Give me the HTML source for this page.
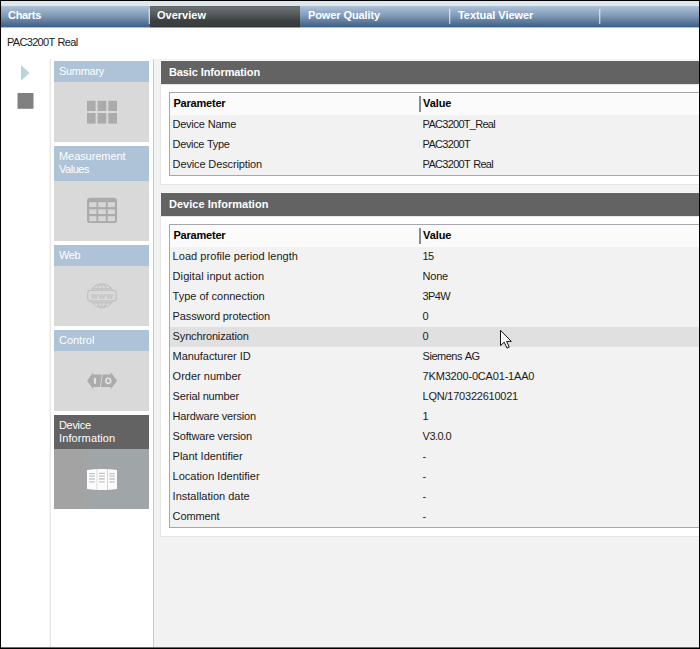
<!DOCTYPE html>
<html><head><meta charset="utf-8"><title>Device Information</title>
<style>
html,body{margin:0;padding:0;background:#fff;}
#app{position:relative;width:700px;height:649px;overflow:hidden;background:#fff;font-family:"Liberation Sans",sans-serif;}
#app div,#app span.t,#app svg{position:absolute;}
.t{white-space:nowrap;line-height:20px;height:20px;}
#frame{left:0;top:0;width:700px;height:649px;box-sizing:border-box;border:1px solid #000;z-index:50;box-shadow:inset 0 -1px 0 #6a6a6a;}
#strip{left:1px;top:1px;width:698px;height:5px;background:#dce7ee;}
#tabbar{left:1px;top:6px;width:698px;height:21px;background:linear-gradient(#b0c0d0 0,#b0c0d0 1px,#a9bdd5 1px,#7f99b6 10px,#446389 20px,#39628f 20px);}
#tabsel{left:150px;top:6px;width:150px;height:21px;background:linear-gradient(#626666 0,#626666 1px,#6b7071 1px,#565b5b 8px,#3b3f3f 15px,#393d3d 20px,#303434 20px);}
.sep{top:9px;width:1px;height:15px;background:rgba(255,255,255,.62);}
.sep2{top:9px;width:1px;height:15px;background:rgba(255,255,255,.22);}
.vline{width:1px;background:#d0d0d0;}
#main{left:154px;top:59px;width:545px;height:589px;background:#f2f2f2;}
.phead{left:161px;width:538px;height:23px;background:#636363;}
.pbody{left:160px;width:540px;background:#fff;border:1px solid #e6e6e6;box-sizing:border-box;}
.tbl{left:169px;width:540px;background:#f2f2f2;border:1px solid #a6a6ac;box-sizing:border-box;}
.thead{left:170px;width:530px;height:22px;background:#fbfbfb;}
.csep{left:419px;width:2px;height:16px;background:#8c8c8c;}
.chead{left:54px;width:95px;background:#aec3d8;}
.cbody{left:54px;width:95px;background:#d9d9d9;}

</style></head>
<body>
<div id="app">
<div id="strip"></div>
<div id="tabbar"></div>
<div id="tabsel"></div>
<div style="left:1px;top:27px;width:698px;height:1px;background:#c2baba"></div>
<div style="left:150px;top:27px;width:150px;height:1px;background:#a2a2a2"></div>
<div class="sep" style="left:149px"></div><div class="sep2" style="left:148px"></div>
<div class="sep" style="left:449px"></div><div class="sep2" style="left:450px"></div>
<div class="sep" style="left:599px"></div><div class="sep2" style="left:600px"></div>

<!-- left tool column -->
<svg style="left:17px;top:62px" width="20" height="50" viewBox="0 0 20 50">
  <polygon points="4,3 12.5,10.9 4,18.8" fill="#b9d5dc"/>
  <rect x="0.5" y="31" width="16" height="15.8" fill="#808080"/>
</svg>
<div class="vline" style="left:49px;top:59px;height:589px;background:#f5f5f5"></div>
<div class="vline" style="left:50px;top:59px;height:589px;background:#e8e8e8"></div>
<div class="vline" style="left:153px;top:59px;height:589px;background:#cbcbcb"></div>

<!-- cards -->
<div class="chead" style="top:61px;height:21px"></div>
<div class="cbody" style="top:82px;height:60px"></div>
<div class="chead" style="top:146px;height:35px"></div>
<div class="cbody" style="top:181px;height:60px"></div>
<div class="chead" style="top:245px;height:21px"></div>
<div class="cbody" style="top:266px;height:60px"></div>
<div class="chead" style="top:330px;height:21px"></div>
<div class="cbody" style="top:351px;height:60px"></div>
<div class="chead" style="top:415px;height:34px;background:#636363"></div>
<div class="cbody" style="top:449px;height:60px;background:#a0a6a8"></div>
<div class="cbody" style="top:449px;height:60px;width:32px;background:#a3a3a3"></div>

<!-- main -->
<div id="main"></div>
<div class="pbody" style="top:84px;height:101px"></div>
<div style="left:160px;top:60px;width:540px;height:24px;background:#f8f8f8"></div>
<div class="phead" style="top:61px"></div>
<div class="tbl" style="top:92px;height:84px"></div>
<div class="thead" style="top:93px"></div>
<div class="csep" style="top:96px"></div>

<div class="pbody" style="top:216px;height:321px"></div>
<div style="left:160px;top:192px;width:540px;height:24px;background:#f5f5f5"></div>
<div class="phead" style="top:193px"></div>
<div class="tbl" style="top:224px;height:304px"></div>
<div class="thead" style="top:225px"></div>
<div class="csep" style="top:228px"></div>
<div style="left:170px;top:327px;width:530px;height:20px;background:#e0e0e0"></div>


<!-- icons -->
<svg style="left:80px;top:94px" width="44" height="36" viewBox="80 94 44 36">
  <g fill="#ababab">
    <rect x="87" y="100.8" width="8.6" height="10.2"/><rect x="97.6" y="100.8" width="8.7" height="10.2"/><rect x="108.3" y="100.8" width="8.7" height="10.2"/>
    <rect x="87" y="113" width="8.6" height="10.6"/><rect x="97.6" y="113" width="8.7" height="10.6"/><rect x="108.3" y="113" width="8.7" height="10.6"/>
  </g>
</svg>
<svg style="left:80px;top:192px" width="44" height="36" viewBox="80 192 44 36">
  <rect x="87" y="197.8" width="30" height="25.3" rx="3.2" fill="#ababab"/>
  <g fill="#d6d6d6">
    <rect x="89.3" y="202.2" width="7.2" height="4.9"/><rect x="98.2" y="202.2" width="7.6" height="4.9"/><rect x="107.7" y="202.2" width="7.2" height="4.9"/>
    <rect x="89.3" y="209.3" width="7.2" height="4.7"/><rect x="98.2" y="209.3" width="7.6" height="4.7"/><rect x="107.7" y="209.3" width="7.2" height="4.7"/>
    <rect x="89.3" y="216.2" width="7.2" height="4.9"/><rect x="98.2" y="216.2" width="7.6" height="4.9"/><rect x="107.7" y="216.2" width="7.2" height="4.9"/>
  </g>
</svg>
<svg style="left:80px;top:278px" width="44" height="36" viewBox="80 278 44 36">
  <g fill="none" stroke="#c3c3c3" stroke-width="1.3">
    <circle cx="102" cy="295.8" r="11.8"/>
    <ellipse cx="102" cy="295.8" rx="5.6" ry="11.8"/>
    <line x1="102" y1="284" x2="102" y2="307.6"/>
    <line x1="92.5" y1="288.8" x2="111.5" y2="288.8"/>
    <line x1="92.5" y1="302.8" x2="111.5" y2="302.8"/>
    <rect x="87.6" y="290.4" width="28.8" height="10.6" rx="3" fill="#d9d9d9"/>
  </g>
  <text transform="translate(102.6,298.5) scale(1,1.14)" text-anchor="middle" font-family="Liberation Sans, sans-serif" font-weight="bold" font-size="7" letter-spacing="1" fill="#c2c2c2">WWW</text>
</svg>
<svg style="left:80px;top:363px" width="44" height="36" viewBox="80 363 44 36">
  <polygon points="87,380.7 93.2,372.3 93.2,374.6 110.8,374.6 110.8,372.3 117.1,380.7 110.8,389.2 110.8,386.9 93.2,386.9 93.2,389.2" fill="#ababab"/>
  <line x1="102.4" y1="374.2" x2="100.3" y2="387.3" stroke="#d9d9d9" stroke-width="0.9"/>
  <rect x="93.9" y="377.8" width="2.1" height="6" fill="#e2e2e2"/>
  <ellipse cx="108.3" cy="380.8" rx="2.4" ry="2.6" fill="none" stroke="#e2e2e2" stroke-width="1.6"/>
</svg>
<svg style="left:80px;top:461px" width="44" height="36" viewBox="80 461 44 36">
  <rect x="96" y="469.2" width="12.5" height="20.6" fill="#d3d5d5"/>
  <g fill="#fbfbfb">
    <polygon points="87,470.1 96.5,469 96.5,490 87,489"/>
    <rect x="97.3" y="469" width="9.7" height="21"/>
    <polygon points="108,469 117,470.1 117,489 108,490"/>
  </g>
  <g stroke="#c4c6c6" stroke-width="1.3">
    <path d="M89.2,473.6H94.8M89.2,476.2H94.8M89.2,479H94.8M89.2,481.8H94.8"/>
    <path d="M99,473.4H104.8M99,476.2H104.8M99,479H104.8M99,481.9H104.8"/>
    <path d="M109.3,473.6H114.8M109.3,476.2H114.8M109.3,479H114.8M109.3,481.8H114.8"/>
  </g>
</svg>
<!-- mouse cursor -->
<svg style="left:497px;top:327px;z-index:40" width="20" height="26" viewBox="-3 -2.4 20 26">
  <path d="M0.5,0.9 L0.5,16.2 L4.2,12.8 L7,18.7 L9.2,17.7 L6.6,12 L11.3,12 Z" fill="#fff" stroke="#111" stroke-width="1" stroke-linejoin="miter"/>
</svg>

<div id="frame"></div>

<span class="t" style="left:8px;top:5.0px;color:#fff;font-size:11px;font-weight:bold;letter-spacing:-0.31px;">Charts</span>
<span class="t" style="left:157px;top:5.0px;color:#fff;font-size:11px;font-weight:bold;letter-spacing:0.01px;">Overview</span>
<span class="t" style="left:308px;top:5.0px;color:#fff;font-size:11px;font-weight:bold;letter-spacing:-0.10px;">Power Quality</span>
<span class="t" style="left:458px;top:5.0px;color:#fff;font-size:11px;font-weight:bold;letter-spacing:-0.05px;">Textual Viewer</span>
<span class="t" style="left:7px;top:31.6px;color:#1a1a1a;font-size:11px;letter-spacing:-0.69px;word-spacing:0.98px;">PAC3200T Real</span>
<span class="t" style="left:59px;top:61.0px;color:#fff;font-size:11px;letter-spacing:-0.29px;">Summary</span>
<span class="t" style="left:59px;top:146.0px;color:#fff;font-size:11px;letter-spacing:-0.07px;">Measurement</span>
<span class="t" style="left:59px;top:159.0px;color:#fff;font-size:11px;letter-spacing:-0.47px;">Values</span>
<span class="t" style="left:59px;top:245.0px;color:#fff;font-size:11px;letter-spacing:-0.37px;">Web</span>
<span class="t" style="left:59px;top:330.0px;color:#fff;font-size:11px;letter-spacing:-0.02px;">Control</span>
<span class="t" style="left:59px;top:414.6px;color:#fff;font-size:11px;letter-spacing:-0.32px;">Device</span>
<span class="t" style="left:59px;top:427.5px;color:#fff;font-size:11px;letter-spacing:0.12px;">Information</span>
<span class="t" style="left:169px;top:62.0px;color:#fff;font-size:11px;font-weight:bold;letter-spacing:-0.11px;">Basic Information</span>
<span class="t" style="left:169px;top:194.0px;color:#fff;font-size:11px;font-weight:bold;letter-spacing:0.02px;">Device Information</span>
<span class="t" style="left:173.4px;top:93.0px;color:#000;font-size:11px;font-weight:bold;letter-spacing:-0.20px;">Parameter</span>
<span class="t" style="left:423px;top:93.0px;color:#000;font-size:11px;font-weight:bold;letter-spacing:-0.07px;">Value</span>
<span class="t" style="left:172.6px;top:114.0px;color:#1a1a1a;font-size:11px;letter-spacing:-0.27px;word-spacing:0.38px;">Device Name</span>
<span class="t" style="left:422.6px;top:114.0px;color:#1a1a1a;font-size:11px;letter-spacing:-0.72px;">PAC3200T_Real</span>
<span class="t" style="left:172.6px;top:134.0px;color:#1a1a1a;font-size:11px;letter-spacing:-0.35px;word-spacing:0.48px;">Device Type</span>
<span class="t" style="left:422.6px;top:134.0px;color:#1a1a1a;font-size:11px;letter-spacing:-0.70px;">PAC3200T</span>
<span class="t" style="left:172.6px;top:154.0px;color:#1a1a1a;font-size:11px;letter-spacing:-0.13px;">Device Description</span>
<span class="t" style="left:422.6px;top:154.0px;color:#1a1a1a;font-size:11px;letter-spacing:-0.70px;word-spacing:0.99px;">PAC3200T Real</span>
<span class="t" style="left:173.4px;top:225.0px;color:#000;font-size:11px;font-weight:bold;letter-spacing:-0.20px;">Parameter</span>
<span class="t" style="left:423px;top:225.0px;color:#000;font-size:11px;font-weight:bold;letter-spacing:-0.07px;">Value</span>
<span class="t" style="left:172.6px;top:246.0px;color:#1a1a1a;font-size:11px;letter-spacing:0.05px;">Load profile period length</span>
<span class="t" style="left:422.6px;top:246.0px;color:#1a1a1a;font-size:11px;letter-spacing:-0.83px;">15</span>
<span class="t" style="left:172.6px;top:266.0px;color:#1a1a1a;font-size:11px;letter-spacing:0.08px;">Digital input action</span>
<span class="t" style="left:422.6px;top:266.0px;color:#1a1a1a;font-size:11px;letter-spacing:-0.22px;">None</span>
<span class="t" style="left:172.6px;top:286.0px;color:#1a1a1a;font-size:11px;letter-spacing:-0.02px;">Type of connection</span>
<span class="t" style="left:422.6px;top:286.0px;color:#1a1a1a;font-size:11px;letter-spacing:-0.64px;">3P4W</span>
<span class="t" style="left:172.6px;top:306.0px;color:#1a1a1a;font-size:11px;letter-spacing:-0.12px;">Password protection</span>
<span class="t" style="left:422.6px;top:306.0px;color:#1a1a1a;font-size:11px;">0</span>
<span class="t" style="left:172.6px;top:326.0px;color:#1a1a1a;font-size:11px;letter-spacing:-0.15px;">Synchronization</span>
<span class="t" style="left:422.6px;top:326.0px;color:#1a1a1a;font-size:11px;">0</span>
<span class="t" style="left:172.6px;top:346.0px;color:#1a1a1a;font-size:11px;letter-spacing:-0.06px;">Manufacturer ID</span>
<span class="t" style="left:422.6px;top:346.0px;color:#1a1a1a;font-size:11px;letter-spacing:-0.48px;word-spacing:0.66px;">Siemens AG</span>
<span class="t" style="left:172.6px;top:366.0px;color:#1a1a1a;font-size:11px;letter-spacing:0.01px;">Order number</span>
<span class="t" style="left:422.6px;top:366.0px;color:#1a1a1a;font-size:11px;letter-spacing:-0.18px;">7KM3200-0CA01-1AA0</span>
<span class="t" style="left:172.6px;top:386.0px;color:#1a1a1a;font-size:11px;letter-spacing:-0.16px;">Serial number</span>
<span class="t" style="left:422.6px;top:386.0px;color:#1a1a1a;font-size:11px;letter-spacing:-0.23px;">LQN/170322610021</span>
<span class="t" style="left:172.6px;top:406.0px;color:#1a1a1a;font-size:11px;letter-spacing:-0.18px;">Hardware version</span>
<span class="t" style="left:422.6px;top:406.0px;color:#1a1a1a;font-size:11px;">1</span>
<span class="t" style="left:172.6px;top:426.0px;color:#1a1a1a;font-size:11px;letter-spacing:-0.16px;">Software version</span>
<span class="t" style="left:422.6px;top:426.0px;color:#1a1a1a;font-size:11px;letter-spacing:-0.54px;">V3.0.0</span>
<span class="t" style="left:172.6px;top:446.0px;color:#1a1a1a;font-size:11px;letter-spacing:-0.02px;">Plant Identifier</span>
<span class="t" style="left:422.6px;top:446.0px;color:#1a1a1a;font-size:11px;">-</span>
<span class="t" style="left:172.6px;top:466.0px;color:#1a1a1a;font-size:11px;letter-spacing:0.01px;">Location Identifier</span>
<span class="t" style="left:422.6px;top:466.0px;color:#1a1a1a;font-size:11px;">-</span>
<span class="t" style="left:172.6px;top:486.0px;color:#1a1a1a;font-size:11px;">Installation date</span>
<span class="t" style="left:422.6px;top:486.0px;color:#1a1a1a;font-size:11px;">-</span>
<span class="t" style="left:172.6px;top:506.0px;color:#1a1a1a;font-size:11px;letter-spacing:-0.10px;">Comment</span>
<span class="t" style="left:422.6px;top:506.0px;color:#1a1a1a;font-size:11px;">-</span>
</div>
</body></html>
